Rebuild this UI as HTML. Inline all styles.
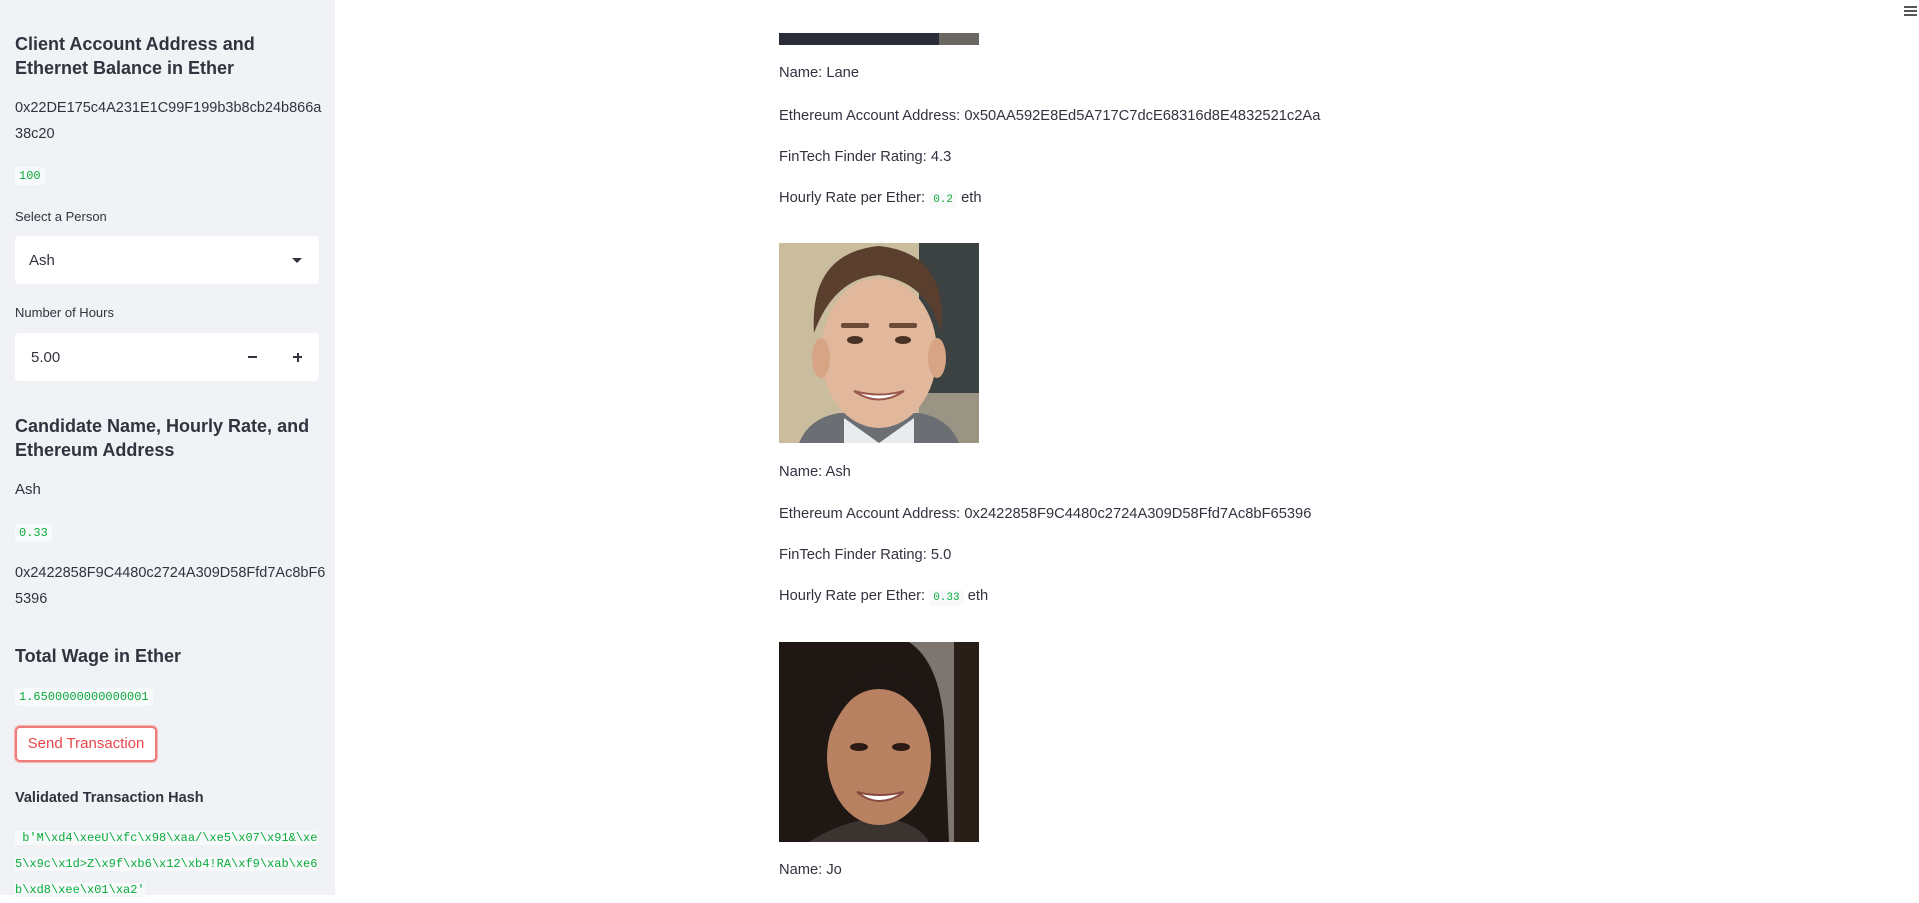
<!DOCTYPE html>
<html><head><meta charset="utf-8">
<style>
*{margin:0;padding:0;box-sizing:border-box}
body{width:1919px;height:895px;overflow:hidden;background:#fff;font-family:"Liberation Sans",sans-serif;color:#31333f;position:relative}
.a{position:absolute;white-space:nowrap}
#side{position:absolute;left:0;top:0;width:335px;height:895px;background:#f0f2f6}
.h{font-weight:bold;font-size:18px;line-height:24px}
.t{font-size:15px;line-height:26px}
.c{font-family:"Liberation Mono",monospace;font-size:12px;color:#09ab3b;background:#f8f9fb;padding:2px 4px;border-radius:3px}
.box{position:absolute;left:15px;width:304px;height:48px;background:#fff;border-radius:4px}
.m{font-size:14.7px;line-height:22px}
.hash{font-family:"Liberation Mono",monospace;font-size:12px;color:#09ab3b;line-height:26px}
.hash span{background:#f8f9fb}
</style></head><body>
<div id="side">
<div class="a h" style="left:15px;top:32px">Client Account Address and<br>Ethernet Balance in Ether</div>
<div class="a t" style="left:15px;top:95px;font-size:14.5px">0x22DE175c4A231E1C99F199b3b8cb24b866a<br>38c20</div>
<div class="a c" style="left:15px;top:167px">100</div>
<div class="a" style="left:15px;top:209px;font-size:13px">Select a Person</div>
<div class="box" style="top:236px"><span class="a" style="left:14px;top:16px;font-size:15px">Ash</span>
<span class="a" style="left:277px;top:22px;width:0;height:0;border-left:5px solid transparent;border-right:5px solid transparent;border-top:5px solid #31333f"></span></div>
<div class="a" style="left:15px;top:305px;font-size:13px">Number of Hours</div>
<div class="box" style="top:333px"><span class="a" style="left:16px;top:16px;font-size:15px">5.00</span>
<span class="a" style="left:233px;top:23px;width:9px;height:2px;background:#31333f"></span>
<span class="a" style="left:278px;top:23px;width:9px;height:2px;background:#31333f"></span>
<span class="a" style="left:281.5px;top:19.5px;width:2px;height:9px;background:#31333f"></span></div>
<div class="a h" style="left:15px;top:414px">Candidate Name, Hourly Rate, and<br>Ethereum Address</div>
<div class="a t" style="left:15px;top:477px">Ash</div>
<div class="a c" style="left:15px;top:524px">0.33</div>
<div class="a t" style="left:15px;top:560px;font-size:14.5px">0x2422858F9C4480c2724A309D58Ffd7Ac8bF6<br>5396</div>
<div class="a h" style="left:15px;top:644px">Total Wage in Ether</div>
<div class="a c" style="left:15px;top:688px">1.6500000000000001</div>
<div class="a" style="left:15px;top:726px;width:142px;height:36px;border:2px solid #f07b7b;border-radius:5px;background:#fff;box-shadow:0 0 0 1px #f7b4b4;color:#e8474a;font-size:15px;line-height:32px;text-align:center">Send Transaction</div>
<div class="a" style="left:15px;top:790px;font-weight:bold;font-size:14.5px">Validated Transaction Hash</div>
<div class="a hash" style="left:15px;top:825px"><span>&nbsp;b'M\xd4\xeeU\xfc\x98\xaa/\xe5\x07\x91&amp;\xe</span><br><span>5\x9c\x1d&gt;Z\x9f\xb6\x12\xb4!RA\xf9\xab\xe6</span><br><span>b\xd8\xee\x01\xa2'</span></div>
</div>

<svg class="a" style="left:779px;top:0" width="200" height="45"><rect width="200" height="45" fill="#2a2c38"/><rect x="160" width="40" height="45" fill="#6a6661"/><rect x="0" y="0" width="200" height="33" fill="#fff"/></svg>
<div class="a m" style="left:779px;top:62px">Name: Lane</div>
<div class="a m" style="left:779px;top:105px">Ethereum Account Address: 0x50AA592E8Ed5A717C7dcE68316d8E4832521c2Aa</div>
<div class="a m" style="left:779px;top:146px">FinTech Finder Rating: 4.3</div>
<div class="a m" style="left:779px;top:187px">Hourly Rate per Ether: <span class="c" style="font-size:11px">0.2</span> eth</div>

<svg class="a" style="left:779px;top:243px" width="200" height="200">
<rect width="200" height="200" fill="#c9bd9d"/><rect x="140" width="60" height="150" fill="#3c4142"/><rect x="140" y="150" width="60" height="50" fill="#9a9484"/>
<path d="M20 200 Q30 175 60 170 L140 170 Q170 175 180 200Z" fill="#6b6e73"/>
<path d="M65 175 L100 200 L135 175 L135 200 L65 200Z" fill="#e8ecef"/>
<ellipse cx="100" cy="110" rx="58" ry="75" fill="#e2b89c"/>
<ellipse cx="42" cy="115" rx="9" ry="20" fill="#d7a586"/><ellipse cx="158" cy="115" rx="9" ry="20" fill="#d7a586"/>
<path d="M35 90 Q30 10 100 3 Q170 10 162 90 Q150 40 100 32 Q55 35 35 90Z" fill="#5a3f2e"/>
<rect x="62" y="80" width="28" height="5" rx="2" fill="#6b4a38"/><rect x="110" y="80" width="28" height="5" rx="2" fill="#6b4a38"/>
<ellipse cx="76" cy="97" rx="8" ry="4" fill="#4a3225"/><ellipse cx="124" cy="97" rx="8" ry="4" fill="#4a3225"/>
<path d="M75 148 Q100 165 125 148 Q100 155 75 148Z" fill="#fff" stroke="#9c5a4e" stroke-width="2"/>
</svg>
<div class="a m" style="left:779px;top:461px">Name: Ash</div>
<div class="a m" style="left:779px;top:503px">Ethereum Account Address: 0x2422858F9C4480c2724A309D58Ffd7Ac8bF65396</div>
<div class="a m" style="left:779px;top:544px">FinTech Finder Rating: 5.0</div>
<div class="a m" style="left:779px;top:585px">Hourly Rate per Ether: <span class="c" style="font-size:11px">0.33</span> eth</div>

<svg class="a" style="left:779px;top:642px" width="200" height="200">
<rect width="200" height="200" fill="#7c7570"/><rect x="175" width="25" height="200" fill="#2a1e19"/>
<path d="M0 0 L130 0 Q160 20 165 80 L170 200 L0 200Z" fill="#1e1714"/>
<path d="M30 200 Q60 180 100 175 Q140 180 150 200Z" fill="#3b3330"/>
<ellipse cx="100" cy="115" rx="52" ry="68" fill="#b88262"/>
<path d="M48 100 Q55 30 110 28 Q150 35 155 90 Q130 45 100 42 Q65 50 48 100Z" fill="#1e1714"/>
<ellipse cx="80" cy="105" rx="9" ry="4" fill="#2a1a14"/><ellipse cx="122" cy="105" rx="9" ry="4" fill="#2a1a14"/>
<path d="M78 150 Q100 168 125 150 Q100 156 78 150Z" fill="#fff" stroke="#8a4a40" stroke-width="2"/>
</svg>
<div class="a m" style="left:779px;top:859px">Name: Jo</div>

<div class="a" style="left:1904px;top:6px;width:13px;height:2px;background:#555"></div>
<div class="a" style="left:1904px;top:10px;width:13px;height:2px;background:#555"></div>
<div class="a" style="left:1904px;top:14px;width:13px;height:2px;background:#555"></div>
</body></html>
